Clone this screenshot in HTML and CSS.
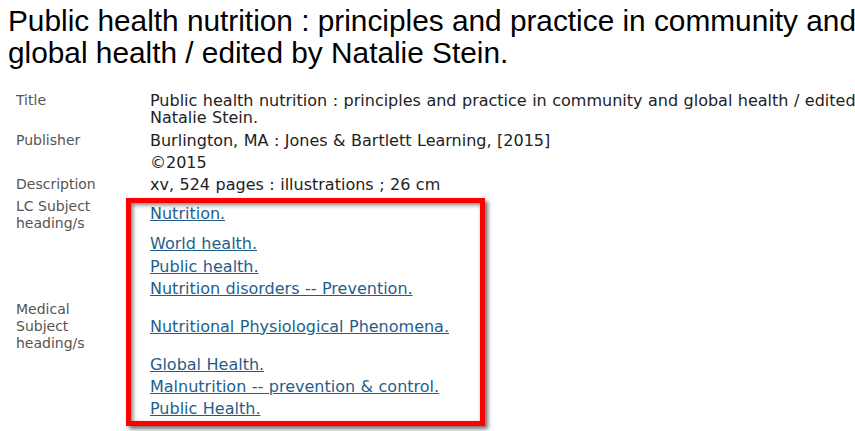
FILE: index.html
```html
<!DOCTYPE html>
<html lang="en">
<head>
<meta charset="utf-8">
<title>Public health nutrition</title>
<link rel="stylesheet" href="styles.css">
</head>
<body>
<div class="page">
  <h1 class="title">Public health nutrition : principles and practice in community and global health / edited by Natalie Stein.</h1>
  <div class="record">
    <div class="label">Title</div>
    <div class="value title-value">Public health nutrition : principles and practice in community and global health / edited by Natalie Stein.</div>

    <div class="label">Publisher</div>
    <div class="value">
      <div>Burlington, MA : Jones &amp; Bartlett Learning, [2015]</div>
      <div class="next-line">&copy;2015</div>
    </div>

    <div class="label">Description</div>
    <div class="value">xv, 524 pages : illustrations ; 26 cm</div>

    <div class="label">LC Subject<br>heading/s</div>
    <div class="value subjects">
      <a class="subject lc-first" href="#">Nutrition.</a>
      <a class="subject lc-second" href="#">World health.</a>
      <a class="subject lc-third" href="#">Public health.</a>
      <a class="subject lc-next" href="#">Nutrition disorders -- Prevention.</a>
    </div>

    <div class="label medical-label">Medical<br>Subject<br>heading/s</div>
    <div class="value subjects medical-value">
      <a class="subject med-first" href="#">Nutritional Physiological Phenomena.</a>
      <a class="subject med-second" href="#">Global Health.</a>
      <a class="subject lc-next" href="#">Malnutrition -- prevention &amp; control.</a>
      <a class="subject lc-next" href="#">Public Health.</a>
    </div>
  </div>
  <div class="highlight"></div>
</div>
</body>
</html>
```
FILE: styles.css
```css
html, body {
  margin: 0;
  padding: 0;
  overflow: hidden;
  background: #ffffff;
}

.page {
  position: relative;
  width: 855px;
  height: 431px;
  box-sizing: border-box;
  overflow: hidden;
  padding: 5px 0 0 8px;
}

.title {
  margin: 0;
  width: 870px;
  font-family: "Liberation Sans", Arial, sans-serif;
  font-weight: normal;
  font-size: 29.8px;
  line-height: 32px;
  color: #000000;
}

.record {
  display: grid;
  grid-template-columns: 134px 750px;
  row-gap: 5px;
  margin: 22.5px 0 0 8px;
  font-family: "DejaVu Sans", Verdana, sans-serif;
}

.label {
  font-size: 14px;
  line-height: 17px;
  color: #555555;
}

.value {
  font-size: 16px;
  line-height: 17px;
  word-spacing: 0.4px;
  color: #222222;
}

.title-value {
  margin-bottom: 1px;
}

.next-line {
  margin-top: 5px;
}

.subjects {
  display: flex;
  flex-direction: column;
  align-items: flex-start;
}

.subject {
  color: #1f5e8c;
  text-decoration: underline;
  line-height: 17px;
}

.medical-label {
  margin-top: -1px;
}

.medical-value {
  margin-top: -2px;
}

.lc-first { margin-top: 7px; }
.lc-second { margin-top: 13px; }
.lc-third { margin-top: 6px; }
.lc-next { margin-top: 5px; }
.med-first { margin-top: 18px; }
.med-second { margin-top: 21px; }

.highlight {
  position: absolute;
  left: 126px;
  top: 198px;
  width: 359px;
  height: 228px;
  box-sizing: border-box;
  border: 5px solid #ff0000;
  box-shadow: 3px 3px 4px rgba(0, 0, 0, 0.55), inset 2px 2px 4px rgba(0, 0, 0, 0.5);
  pointer-events: none;
}
```
